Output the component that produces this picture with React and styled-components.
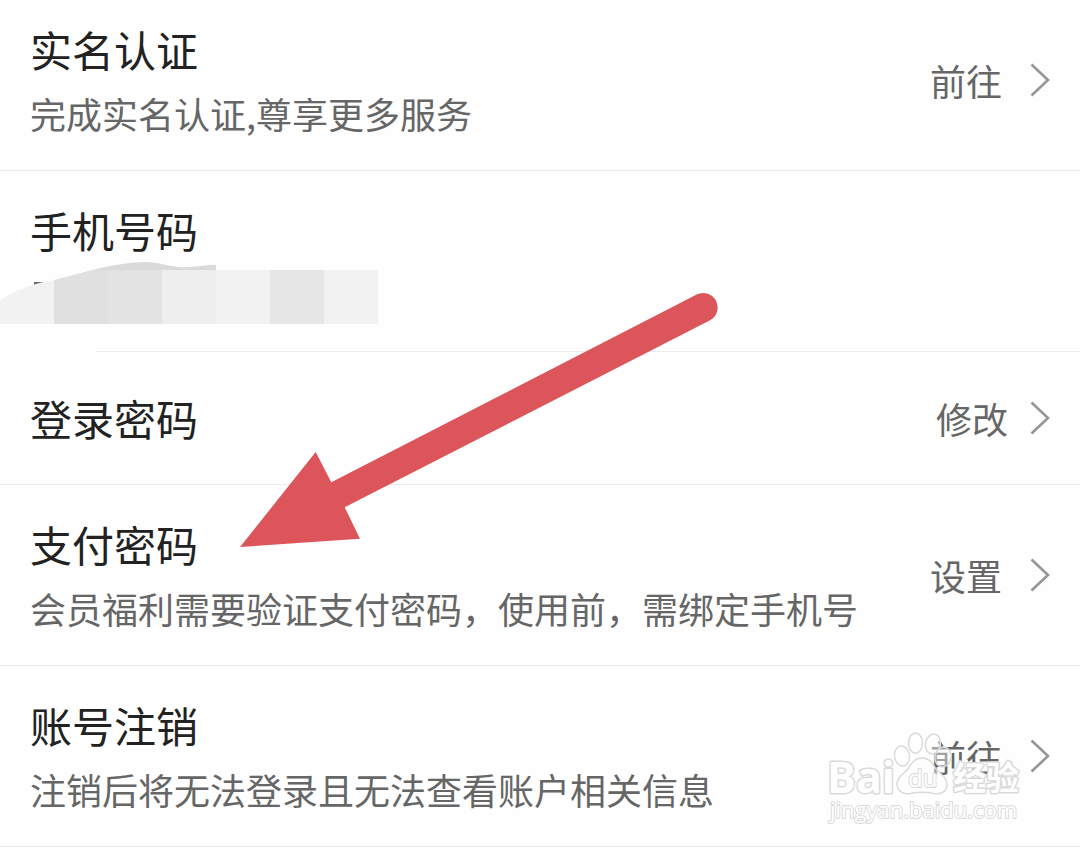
import React from 'react';
import styled, { createGlobalStyle } from 'styled-components'

const settings = [
    { title: '实名认证', desc: '完成实名认证,尊享更多服务', action: '前往' },
    { title: '手机号码', masked: true },
    { title: '登录密码', action: '修改', single: true },
    { title: '支付密码', desc: '会员福利需要验证支付密码，使用前，需绑定手机号', action: '设置' },
    { title: '账号注销', desc: '注销后将无法登录且无法查看账户相关信息', action: '前往' },
];

function Chevron() {
    return (
        <svg width="20" height="34" viewBox="0 0 20 34" fill="none" aria-hidden="true">
            <path d="M1.5 1.5 L18 17 L1.5 32.5" stroke="#969696" strokeWidth="2.6" />
        </svg>
    );
}

function PhoneMask() {
    return (
        <Mask width="400" height="114" viewBox="0 0 400 114" aria-hidden="true">
            <path d="M34 20 H46 L34 23 Z" fill="#666" />
            <path d="M92 8 C112 3 132 0 145 0 C158 0 168 4 178 5 C192 6 202 3 216 3 V9 H92 Z" fill="#dadada" />
            <path d="M0 38 C16 28 34 21 54 18 V62 H0 Z" fill="#f2f2f2" />
            <path d="M54 18 L92 8 H108 V62 H54 Z" fill="#e0e0e0" />
            <rect x="108" y="8" width="54" height="54" fill="#e3e3e3" />
            <rect x="162" y="8" width="54" height="54" fill="#eeeeee" />
            <rect x="216" y="8" width="54" height="54" fill="#f2f2f2" />
            <rect x="270" y="8" width="54" height="54" fill="#e6e6e6" />
            <rect x="324" y="8" width="54" height="54" fill="#f2f2f2" />
            <rect x="0" y="62" width="96" height="50" fill="#fefefe" />
        </Mask>
    );
}

function PointerArrow() {
    return (
        <Arrow width="480" height="256" viewBox="0 0 480 256" aria-hidden="true">
            <path
                d="M0 255 L75.7 160 L91.3 190.3 L456.7 2.6 A14 14 0 0 1 469.6 28.5 L104.7 215.3 L120 246.7 Z"
                fill="#db555b"
            />
        </Arrow>
    );
}

function BaiduMark() {
    return (
        <Watermark width="200" height="98" viewBox="0 0 200 98">
            <g fill="#fff" fillOpacity="0.4" stroke="#dadada" strokeWidth="1.5">
                <ellipse cx="80" cy="32" rx="7.5" ry="10" transform="rotate(-8 80 32)" />
                <ellipse cx="93.5" cy="19" rx="7" ry="10" />
                <ellipse cx="111" cy="20" rx="7.5" ry="10" transform="rotate(10 111 20)" />
                <ellipse cx="121" cy="33" rx="8" ry="10" transform="rotate(10 121 33)" />
                <path d="M100 34 C92 34 89 40 86 45 C82 50 75 53 75 60 C76 68 81 70.5 88 69.5 C95 68 105 68 112 69.5 C120 71 125 67 125 60 C125 53 118 50 114 45 C111 40 108 34 100 34 Z" />
            </g>
            <LogoText x="5" y="69" fontSize="43">Bai</LogoText>
            <LogoText x="86" y="63" fontSize="24" $light>du</LogoText>
            <LogoText x="131" y="66" fontSize="33">经验</LogoText>
            <LogoText x="8" y="94" fontSize="22" $light>jingyan.baidu.com</LogoText>
        </Watermark>
    );
}

export default function App() {
  return (
    <>
    <GlobalStyle />
    <Page>
        <List>
            {
                settings.map((item) => {
                    let { title, desc, action, single, masked } = item;
                    return (
                        <Row key={title} $single={single}>
                            <Info>
                                <Title>{title}</Title>
                                {desc && <Desc>{desc}</Desc>}
                                {masked && <Desc as="div" />}
                            </Info>
                            {action && (
                                <Action type="button" $single={single} aria-label={`${title} ${action}`}>
                                    {action}
                                    <Chevron />
                                </Action>
                            )}
                            {masked && <PhoneMask />}
                        </Row>
                    );
                })
            }
        </List>
        <PointerArrow />
        <BaiduMark />
    </Page>
    </>
  )
}

const GlobalStyle = createGlobalStyle`
    * {
        box-sizing: border-box;
    }
    body {
        margin: 0;
        background: #fefefe;
        font-family: "Noto Sans CJK SC", sans-serif;
    }
`

const Page = styled.main`
    position: relative;
    overflow: hidden;
    padding-bottom: 1px;
`
const List = styled.ul`
    list-style: none;
    margin: -10px 0 0;
    padding: 0;
`
const Row = styled.li`
    position: relative;
    display: flex;
    align-items: center;
    justify-content: space-between;
    padding: ${props => props.$single ? '40px 30px' : '33px 30px'};
    border-bottom: 1px solid #ebebeb;
`
const Info = styled.div`
    display: flex;
    flex-direction: column;
    gap: 14px;
`
const Title = styled.h2`
    margin: 0;
    font-weight: 400;
    font-size: 42px;
    line-height: 52px;
    color: #222;
`
const Desc = styled.p`
    margin: 0;
    min-height: 48px;
    font-size: 36px;
    line-height: 48px;
    color: #666;
`
const Action = styled.button`
    display: flex;
    align-items: center;
    gap: ${props => props.$single ? '22px' : '28px'};
    padding: 0;
    border: none;
    background: none;
    font: inherit;
    font-size: 36px;
    line-height: 48px;
    color: #666;
    cursor: pointer;
`
const Mask = styled.svg`
    position: absolute;
    left: 0;
    top: 91px;
`
const Arrow = styled.svg`
    position: absolute;
    left: 240px;
    top: 292px;
    pointer-events: none;
`
const Watermark = styled.svg`
    position: absolute;
    right: 58px;
    bottom: 26px;
    overflow: visible;
    pointer-events: none;
`
const LogoText = styled.text`
    font-family: "Open Sans", "Noto Sans CJK SC", sans-serif;
    font-weight: ${props => props.$light ? 400 : 700};
    fill: #fff;
    stroke: #dadada;
    stroke-width: ${props => props.$light ? '2px' : '3px'};
    stroke-linejoin: round;
    paint-order: stroke;
`
